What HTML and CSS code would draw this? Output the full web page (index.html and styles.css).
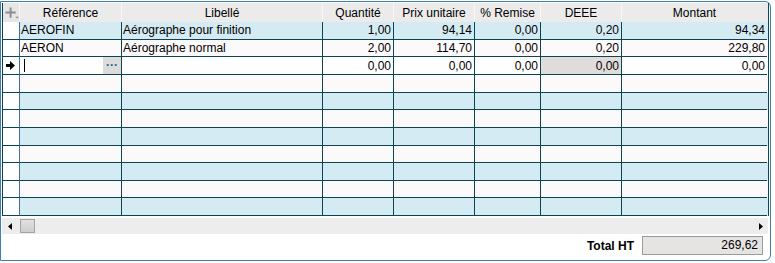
FILE: index.html
```html
<!DOCTYPE html>
<html lang="fr">
<head>
  <meta charset="UTF-8">
  <title>Lignes de document</title>
<link rel="stylesheet" href="styles.css">
</head>
<body>
<div class="frame">
	<div class="grid">
		<div class="row head">
			<div class="cell ind">
				<svg width="15" height="14" viewBox="0 0 15 14">
					<path d="M6 1v11M0.5 6.5h11" stroke="#8c8c8c" stroke-width="2"/>
					<path d="M11 11h4l-2 2z" fill="#8c8c8c"/>
				</svg>
			</div>
			<div class="cell">Référence</div>
			<div class="cell">Libellé</div>
			<div class="cell">Quantité</div>
			<div class="cell">Prix unitaire</div>
			<div class="cell">% Remise</div>
			<div class="cell">DEEE</div>
			<div class="cell">Montant</div>
		</div>

		<div class="body">
			<div class="row alt">
				<div class="cell ind"></div>
				<div class="cell txt">AEROFIN</div>
				<div class="cell txt">Aérographe pour finition</div>
				<div class="cell num">1,00</div>
				<div class="cell num">94,14</div>
				<div class="cell num">0,00</div>
				<div class="cell num">0,20</div>
				<div class="cell num">94,34</div>
			</div>
			<div class="row">
				<div class="cell ind"></div>
				<div class="cell txt">AERON</div>
				<div class="cell txt">Aérographe normal</div>
				<div class="cell num">2,00</div>
				<div class="cell num">114,70</div>
				<div class="cell num">0,00</div>
				<div class="cell num">0,20</div>
				<div class="cell num">229,80</div>
			</div>
			<div class="row edit">
				<div class="cell ind">
					<svg width="9" height="9" viewBox="0 0 9 9">
						<path d="M0 3h4V0l5 4.5L4 9V6H0z" fill="#000"/>
					</svg>
				</div>
				<div class="cell txt ref"><span class="caret"></span><span class="more">···</span></div>
				<div class="cell txt"></div>
				<div class="cell num">0,00</div>
				<div class="cell num">0,00</div>
				<div class="cell num">0,00</div>
				<div class="cell num locked">0,00</div>
				<div class="cell num">0,00</div>
			</div>
			<div class="row"><div class="cell ind"></div><div class="cell"></div><div class="cell"></div><div class="cell"></div><div class="cell"></div><div class="cell"></div><div class="cell"></div><div class="cell"></div></div>
			<div class="row alt"><div class="cell ind"></div><div class="cell"></div><div class="cell"></div><div class="cell"></div><div class="cell"></div><div class="cell"></div><div class="cell"></div><div class="cell"></div></div>
			<div class="row"><div class="cell ind"></div><div class="cell"></div><div class="cell"></div><div class="cell"></div><div class="cell"></div><div class="cell"></div><div class="cell"></div><div class="cell"></div></div>
			<div class="row alt"><div class="cell ind"></div><div class="cell"></div><div class="cell"></div><div class="cell"></div><div class="cell"></div><div class="cell"></div><div class="cell"></div><div class="cell"></div></div>
			<div class="row"><div class="cell ind"></div><div class="cell"></div><div class="cell"></div><div class="cell"></div><div class="cell"></div><div class="cell"></div><div class="cell"></div><div class="cell"></div></div>
			<div class="row alt"><div class="cell ind"></div><div class="cell"></div><div class="cell"></div><div class="cell"></div><div class="cell"></div><div class="cell"></div><div class="cell"></div><div class="cell"></div></div>
			<div class="row"><div class="cell ind"></div><div class="cell"></div><div class="cell"></div><div class="cell"></div><div class="cell"></div><div class="cell"></div><div class="cell"></div><div class="cell"></div></div>
			<div class="row alt"><div class="cell ind"></div><div class="cell"></div><div class="cell"></div><div class="cell"></div><div class="cell"></div><div class="cell"></div><div class="cell"></div><div class="cell"></div></div>
		</div>
	</div>

	<div class="hscroll">
		<svg class="arrow" width="4" height="7" viewBox="0 0 4 7"><path d="M4 0v7L0 3.5z" fill="#000"/></svg>
		<span class="thumb"></span>
		<span class="track"></span>
		<svg class="arrow" width="4" height="7" viewBox="0 0 4 7"><path d="M0 0v7l4-3.5z" fill="#000"/></svg>
	</div>

	<div class="totals">
		<span class="label">Total HT</span>
		<span class="box">269,62</span>
	</div>
</div>
</body>
</html>
```

FILE: styles.css
```css
* {
	margin: 0;
	padding: 0;
	box-sizing: border-box;
}

body {
	font: 12px "Liberation Sans", Arial, sans-serif;
	color: #000;
	background: #fff;
}

.frame {
	width: 771px;
	height: 260px;
	margin-top: 1px;
	padding: 0 0 0 1px;
	border: 1px solid #3f7fb6;
	border-radius: 0 6px 6px 0;
	display: flex;
	flex-direction: column;
}

.grid {
	width: 767px;
	margin-top: 1px;
	border-left: 1px solid #0b4650;
	border-right: 1px solid #0b4650;
}

.row {
	display: grid;
	grid-template-columns: 17px 102px 201px 71px 81px 66px 81px 145px;
	background: #fcf9fb;
}

.cell {
	display: flex;
	align-items: center;
	border-right: 1px solid #0b4650;
	border-bottom: 1px solid #0b4650;
	white-space: nowrap;
	overflow: hidden;
}

.cell:last-child {
	border-right: none;
}

/* header */
.head {
	height: 19px;
	background: #ebebeb;
}

.head .cell {
	justify-content: center;
	border-right-color: #f7f7f7;
	border-bottom: none;
}

.head .ind {
	justify-content: flex-start;
	padding-left: 2px;
	background: #e6e6e6;
}

/* body rows */
.body {
	height: 194px;
	display: grid;
	grid-template-rows: repeat(11, 1fr);
}

.row.alt {
	background: #d5ebf4;
}

.body .ind {
	background: #fff;
	border-right-color: #3d6e9e;
	padding-left: 3px;
}

.txt {
	padding-left: 1px;
}

.num {
	justify-content: flex-end;
	padding-right: 2px;
}

.row.edit {
	background: #fff;
}

.edit .locked {
	background: #e0dcdb;
}

.ref {
	justify-content: space-between;
	padding-left: 4px;
}

.caret {
	width: 1px;
	height: 13px;
	background: #000;
}

.more {
	align-self: stretch;
	width: 18px;
	background: #dcdcdc;
	color: #1f6a8c;
	font-weight: bold;
	font-size: 12px;
	line-height: 17px;
	text-align: center;
}

/* horizontal scrollbar */
.hscroll {
	width: 766px;
	height: 16px;
	margin-top: 2px;
	padding: 0 5px 0 6px;
	background: #ededed;
	display: flex;
	align-items: center;
}

.thumb {
	width: 15px;
	height: 14px;
	margin-left: 8px;
	border: 1px solid #a4a4a4;
	background: linear-gradient(#e2e0e0, #cfcccc);
}

.track {
	flex: 1;
}

/* footer total */
.totals {
	display: flex;
	align-items: center;
	justify-content: flex-end;
	gap: 8px;
	margin-top: 2px;
	padding-right: 7px;
}

.label {
	font-weight: bold;
}

.box {
	width: 121px;
	height: 19px;
	padding-right: 4px;
	border: 1px solid #9a9a9a;
	background: #e6e3e3;
	text-align: right;
	line-height: 17px;
}
```
